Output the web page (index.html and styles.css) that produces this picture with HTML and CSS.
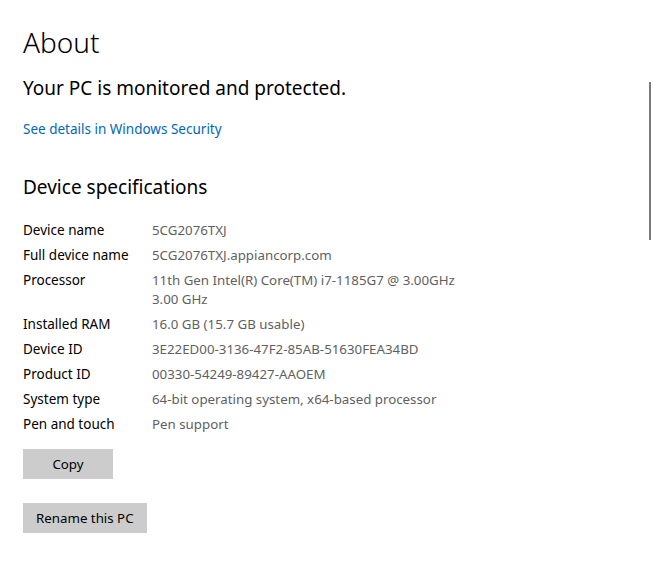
FILE: index.html
```html
<!DOCTYPE html>
<html lang="en">
  <head>
    <meta charset="UTF-8" />
    <meta name="viewport" content="width=device-width, initial-scale=1.0" />
    <title>About</title>
    <link rel="stylesheet" href="styles.css">
  </head>
  <body>
    <div class="page">
      <h1>About</h1>
      <p class="status">Your PC is monitored and protected.</p>
      <a class="link" href="#">See details in Windows Security</a>

      <!-- Specs table -->
      <h2>Device specifications</h2>
      <div class="specs">
        <div class="label">Device name</div>
        <div class="value">5CG2076TXJ</div>
        <div class="label">Full device name</div>
        <div class="value">5CG2076TXJ.appiancorp.com</div>
        <div class="label">Processor</div>
        <div class="value">11th Gen Intel(R) Core(TM) i7-1185G7 @ 3.00GHz<br>3.00 GHz</div>
        <div class="label">Installed RAM</div>
        <div class="value">16.0 GB (15.7 GB usable)</div>
        <div class="label">Device ID</div>
        <div class="value">3E22ED00-3136-47F2-85AB-51630FEA34BD</div>
        <div class="label">Product ID</div>
        <div class="value">00330-54249-89427-AAOEM</div>
        <div class="label">System type</div>
        <div class="value">64-bit operating system, x64-based processor</div>
        <div class="label">Pen and touch</div>
        <div class="value">Pen support</div>
      </div>

      <button class="btn btn-copy">Copy</button>
      <button class="btn">Rename this PC</button>
    </div>
    <div class="scrollbar"></div>
  </body>
</html>
```
FILE: styles.css
```css
body {
  margin: 0;
  font-family: "Noto Sans", "Open Sans", sans-serif;
  color: #000;
  background: #fff;
}
.page {
  padding: 25px 0 0 23px;
}
h1 {
  margin: 0;
  font-size: 28px;
  font-weight: 300;
  line-height: 34px;
}
.status {
  margin: 16px 0 0;
  font-size: 19px;
  line-height: 26px;
}
.link {
  display: block;
  margin-top: 19px;
  font-size: 13.5px;
  color: #0067b8;
  text-decoration: none;
}
h2 {
  margin: 36px 0 0;
  font-size: 19px;
  font-weight: 400;
  line-height: 26px;
}
.specs {
  display: grid;
  grid-template-columns: 129px auto;
  row-gap: 6px;
  margin-top: 21px;
  font-size: 13.3px;
  line-height: 19px;
}
.label {
  font-size: 13.5px;
}
.value {
  color: #5f5f5f;
}
.btn {
  display: block;
  height: 30px;
  padding: 0 13px;
  border: none;
  background: #cccccc;
  font-family: inherit;
  font-size: 13.3px;
  color: #000;
}
.btn-copy {
  width: 90px;
  margin: 15px 0 24px;
}
.scrollbar {
  position: absolute;
  top: 82px;
  right: 2px;
  width: 2px;
  height: 158px;
  background: #7a7a7a;
}
```
